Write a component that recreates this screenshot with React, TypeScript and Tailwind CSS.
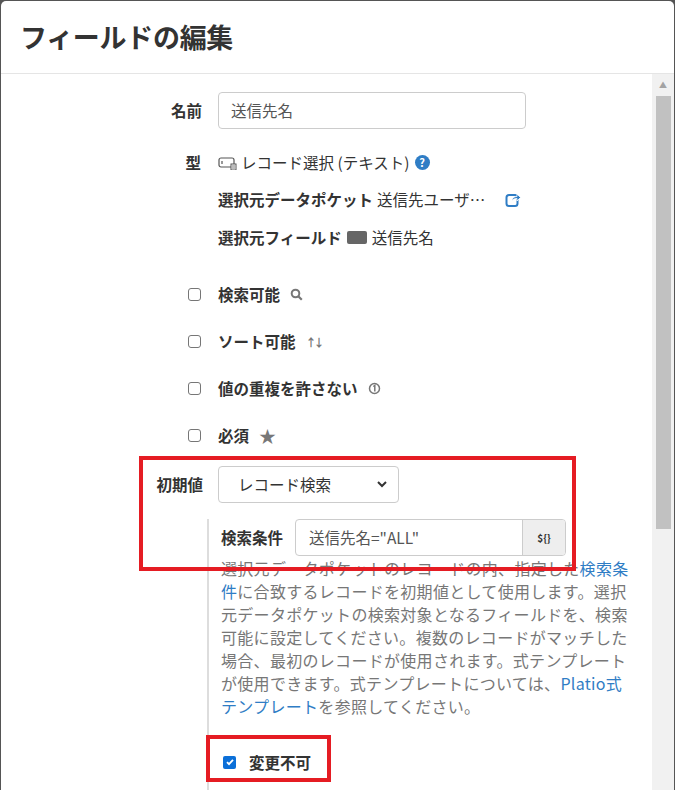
import React from "react";

const F = { fontFamily: '"Noto Sans CJK JP", "Noto Sans", sans-serif' };

function CB({ checked = false }: { checked?: boolean }) {
  return checked ? (
    <span className="w-[13px] h-[13px] rounded-[2px] bg-[#0b6fd8] flex items-center justify-center">
      <svg width="10" height="10" viewBox="0 0 10 10"><path d="M2 5.2l2 2 4-4.4" stroke="#fff" strokeWidth="1.8" fill="none" /></svg>
    </span>
  ) : (
    <span className="w-[13px] h-[13px] rounded-[3px] border border-[#767676] bg-white block" />
  );
}

export default function App() {
  return (
    <div style={F} className="w-[675px] h-[790px] bg-[#555] pt-px px-px overflow-hidden text-[#333]">
      <div className="bg-white rounded-t-[5px] h-[789px] flex flex-col overflow-hidden">
        <div className="h-[73px] border-b border-[#e5e5e5] flex items-center pl-[19px] shrink-0">
          <h1 className="text-[27px] font-bold tracking-[-0.3px] text-[#333]">フィールドの編集</h1>
        </div>
        <div className="flex flex-1 min-h-0">
          <div className="flex-1 relative text-[15.5px]">
            <div className="flex items-center mt-[18px]">
              <div className="w-[217px] text-right font-bold pr-[16px] box-border">名前</div>
              <div className="w-[308px] h-[37px] border border-[#ccc] rounded-[4px] flex items-center px-[12px] text-[#555]">送信先名</div>
            </div>
            <div className="flex mt-[22px]">
              <div className="w-[217px] text-right font-bold pr-[17px]">型</div>
              <div className="flex flex-col gap-[14px]">
                <div className="flex items-center gap-[3px]">
                  <svg width="20" height="14" viewBox="0 0 20 14"><rect x="1" y="2" width="15" height="9" rx="2" fill="none" stroke="#555" strokeWidth="1.2" /><path d="M4 5v3" stroke="#555" strokeWidth="1.2" /><rect x="13" y="8" width="5" height="6" fill="#fff" stroke="#555" strokeWidth="1" /><path d="M14 10h3M14 12h3" stroke="#555" strokeWidth="0.8" /></svg>
                  <span>レコード選択 (テキスト)</span>
                  <span className="w-[15px] h-[15px] rounded-full bg-[#2f7dc5] text-white text-[11px] font-bold flex items-center justify-center ml-[2px]">?</span>
                </div>
                <div className="flex items-center">
                  <span className="font-bold">選択元データポケット</span>
                  <span className="ml-[4px] w-[118px] truncate">送信先ユーザー…</span>
                  <svg width="16" height="16" viewBox="0 0 16 16" className="ml-[10px]"><rect x="1.5" y="3" width="11" height="11" rx="2.5" fill="none" stroke="#2f7dc5" strokeWidth="2" /><path d="M7 9c0-3 2-4.5 5-4.5V2l3.5 3.5L12 9V6.5C10 6.5 8 7 7 9z" fill="#2f7dc5" stroke="#fff" strokeWidth="0.8" /></svg>
                </div>
                <div className="flex items-center">
                  <span className="font-bold">選択元フィールド</span>
                  <span className="ml-[5px] w-[20px] h-[13px] bg-[#666] rounded-[2px] inline-block" />
                  <span className="ml-[5px]">送信先名</span>
                </div>
              </div>
            </div>
            <div className="flex flex-col gap-[31px] mt-[38px]">
              {[
                ["検索可能", <svg width="13" height="13" viewBox="0 0 13 13"><circle cx="5.5" cy="5.5" r="3.8" fill="none" stroke="#777" strokeWidth="2" /><path d="M8.3 8.3l3.5 3.5" stroke="#777" strokeWidth="2.2" /></svg>],
                ["ソート可能", <span className="text-[#777] text-[11px] font-bold tracking-[-3px]">↑↓</span>],
                ["値の重複を許さない", <svg width="13" height="13" viewBox="0 0 13 13"><circle cx="6.5" cy="6.5" r="5" fill="none" stroke="#777" strokeWidth="1.5" /><path d="M5.3 4.5l1.5-1v6" stroke="#777" strokeWidth="1.5" fill="none" /></svg>],
                ["必須", <span className="text-[#777] text-[17px] leading-none">★</span>],
              ].map(([t, ic], i) => (
                <div key={i} className="flex items-center h-[16px]">
                  <div className="w-[217px] flex justify-end pr-[17px]"><CB /></div>
                  <span className="font-bold">{t as string}</span>
                  <span className="ml-[10px] flex items-center">{ic as React.ReactNode}</span>
                </div>
              ))}
            </div>
            <div className="flex items-center mt-[22px]">
              <div className="w-[217px] text-right font-bold pr-[15px]">初期値</div>
              <div className="w-[181px] h-[37px] border border-[#ccc] rounded-[4px] flex items-center justify-between pl-[19px] pr-[10px]">
                <span>レコード検索</span>
                <svg width="12" height="10" viewBox="0 0 12 10"><path d="M2 3l4 4 4-4" stroke="#333" strokeWidth="2" fill="none" /></svg>
              </div>
            </div>
            <div className="ml-[206px] mt-[16px] border-l-2 border-[#ddd] pl-[12px] pb-[40px] w-[424px]">
              <div className="flex items-center">
                <span className="font-bold w-[74px]">検索条件</span>
                <div className="flex h-[37px] w-[271px] border border-[#ccc] rounded-[4px] overflow-hidden">
                  <div className="flex-1 flex items-center px-[13px] text-[#555]">送信先名="ALL"</div>
                  <div className="w-[43px] bg-[#eee] border-l border-[#ccc] flex items-center justify-center text-[10px] font-bold">${"{}"}</div>
                </div>
              </div>
              <p className="text-[#777] text-[16px] tracking-[0.3px] leading-[23px] mt-[1px] w-[412px]">
                選択元データポケットのレコードの内、指定した<span className="text-[#2f7dc5]">検索条件</span>に合致するレコードを初期値として使用します。選択元データポケットの検索対象となるフィールドを、検索可能に設定してください。複数のレコードがマッチした場合、最初のレコードが使用されます。式テンプレートが使用できます。式テンプレートについては、<span className="text-[#2f7dc5]">Platio式テンプレート</span>を参照してください。
              </p>
              <div className="flex items-center mt-[33px] ml-[2px]">
                <CB checked />
                <span className="font-bold ml-[13px]">変更不可</span>
              </div>
            </div>
            <div className="absolute left-[138px] top-[382px] w-[437px] h-[115px] border-[4px] border-[#e51c23]" />
            <div className="absolute left-[205px] top-[661px] w-[125px] h-[47px] border-[4px] border-[#e51c23]" />
          </div>
          <div className="w-[22px] bg-[#f1f1f1] flex flex-col items-center">
            <span className="text-[8px] text-[#a3a3a3] mt-[4px] leading-[14px]">▲</span>
            <div className="w-[15px] h-[433px] bg-[#c1c1c1] mt-[4px]" />
          </div>
        </div>
      </div>
    </div>
  );
}
